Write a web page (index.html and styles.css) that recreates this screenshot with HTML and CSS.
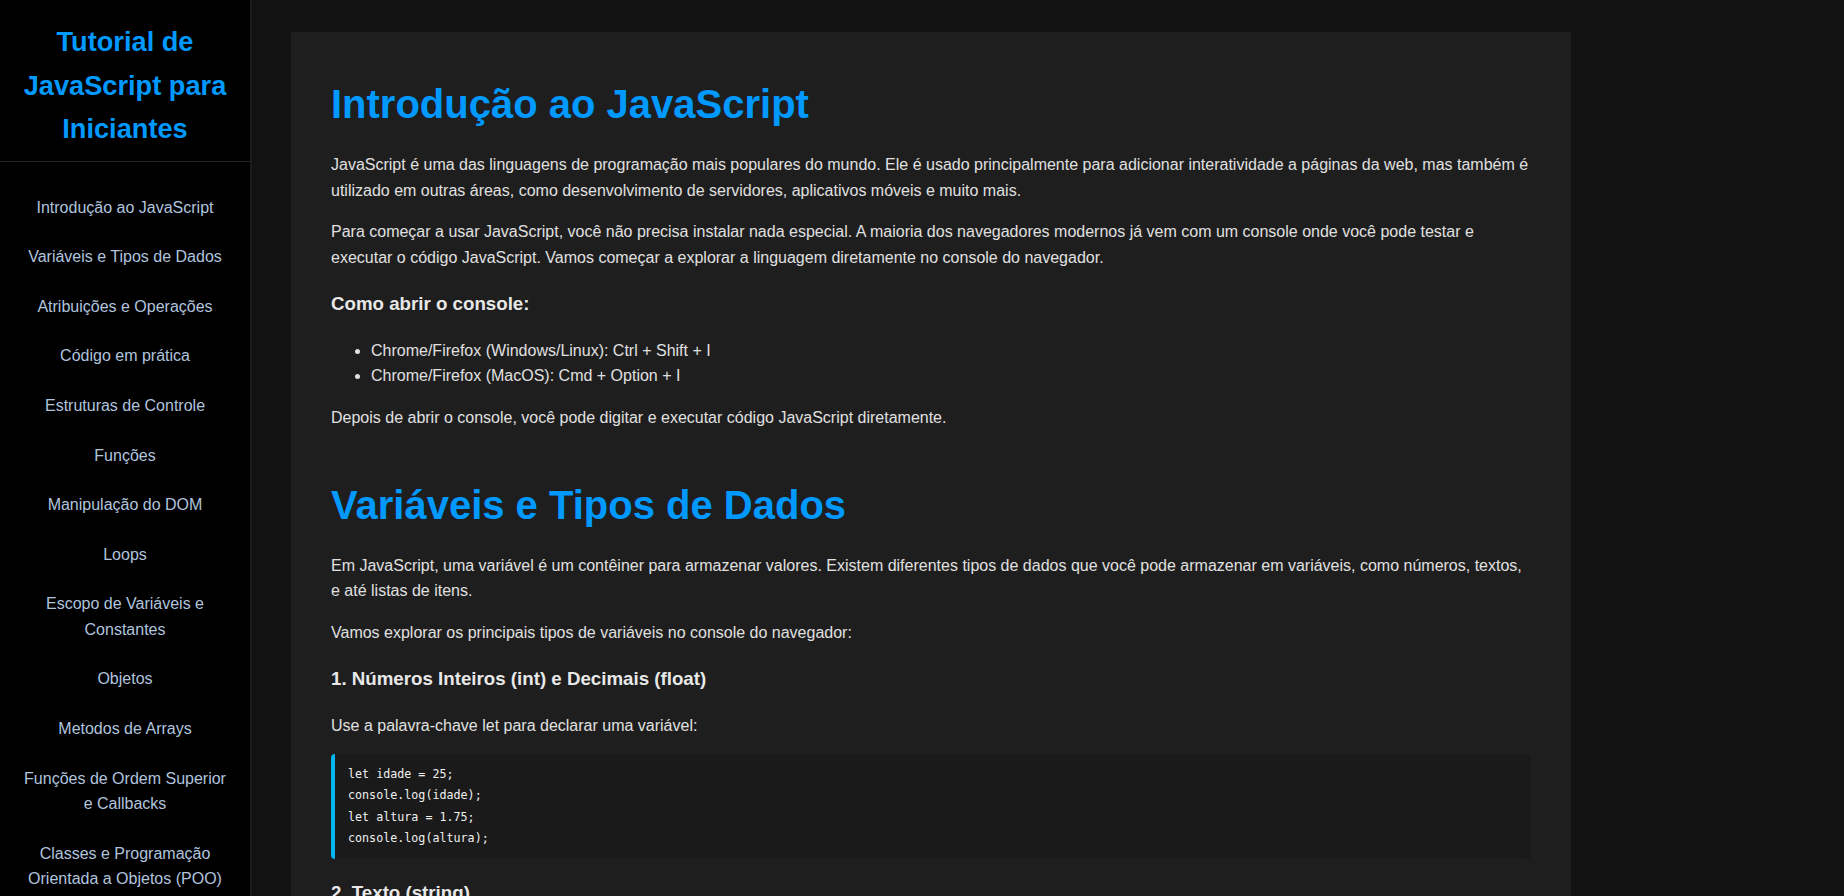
FILE: index.html
```html
<!DOCTYPE html>
<html lang="pt-BR">
<head>
<meta charset="utf-8">
<title>Tutorial de JavaScript para Iniciantes</title>
<link rel="stylesheet" href="styles.css">
</head>
<body>
<aside class="sidebar">
  <header class="sidebar-header">
    <h1 class="site-title">Tutorial de JavaScript para Iniciantes</h1>
  </header>
  <nav class="nav">
    <a class="nav-link" href="#intro">Introdução ao JavaScript</a>
    <a class="nav-link" href="#variaveis">Variáveis e Tipos de Dados</a>
    <a class="nav-link" href="#atribuicoes">Atribuições e Operações</a>
    <a class="nav-link" href="#pratica">Código em prática</a>
    <a class="nav-link" href="#controle">Estruturas de Controle</a>
    <a class="nav-link" href="#funcoes">Funções</a>
    <a class="nav-link" href="#dom">Manipulação do DOM</a>
    <a class="nav-link" href="#loops">Loops</a>
    <a class="nav-link" href="#escopo">Escopo de Variáveis e Constantes</a>
    <a class="nav-link" href="#objetos">Objetos</a>
    <a class="nav-link" href="#arrays">Metodos de Arrays</a>
    <a class="nav-link" href="#ordem">Funções de Ordem Superior e Callbacks</a>
    <a class="nav-link" href="#classes">Classes e Programação Orientada a Objetos (POO)</a>
    <a class="nav-link" href="#async">Programação Assíncrona</a>
    <a class="nav-link" href="#erros">Tratamento de Erros</a>
  </nav>
</aside>
<main class="main">
  <article class="card">
    <section class="section" id="intro">
      <h1 class="section-title">Introdução ao JavaScript</h1>
      <p>JavaScript é uma das linguagens de programação mais populares do mundo. Ele é usado principalmente para adicionar interatividade a páginas da web, mas também é utilizado em outras áreas, como desenvolvimento de servidores, aplicativos móveis e muito mais.</p>
      <p>Para começar a usar JavaScript, você não precisa instalar nada especial. A maioria dos navegadores modernos já vem com um console onde você pode testar e executar o código JavaScript. Vamos começar a explorar a linguagem diretamente no console do navegador.</p>
      <h3 class="sub-title">Como abrir o console:</h3>
      <ul class="list">
        <li>Chrome/Firefox (Windows/Linux): Ctrl + Shift + I</li>
        <li>Chrome/Firefox (MacOS): Cmd + Option + I</li>
      </ul>
      <p>Depois de abrir o console, você pode digitar e executar código JavaScript diretamente.</p>
    </section>
    <section class="section" id="variaveis">
      <h1 class="section-title">Variáveis e Tipos de Dados</h1>
      <p>Em JavaScript, uma variável é um contêiner para armazenar valores. Existem diferentes tipos de dados que você pode armazenar em variáveis, como números, textos, e até listas de itens.</p>
      <p>Vamos explorar os principais tipos de variáveis no console do navegador:</p>
      <h3 class="sub-title">1. Números Inteiros (int) e Decimais (float)</h3>
      <p>Use a palavra-chave let para declarar uma variável:</p>
      <pre class="code">let idade = 25;
console.log(idade);
let altura = 1.75;
console.log(altura);</pre>
      <h3 class="sub-title">2. Texto (string)</h3>
      <p>Textos são escritos entre aspas simples ou duplas:</p>
      <pre class="code">let nome = "Maria";
console.log(nome);</pre>
    </section>
  </article>
</main>
</body>
</html>
```

FILE: styles.css
```css
* {
  box-sizing: border-box;
}

html,
body {
  height: 100%;
}

body {
  margin: 0;
  display: flex;
  overflow: hidden;
  background: #121212;
  color: #e0e0e0;
  font-family: "Liberation Sans", Arial, sans-serif;
  font-size: 16px;
  line-height: 1.6;
}

.sidebar {
  flex: 0 0 252px;
  height: 100vh;
  overflow: hidden;
  background: #000000;
  border-right: 2px solid #1c1c1c;
}

.sidebar-header {
  padding: 20px 20px 10px;
  border-bottom: 1px solid #262626;
  text-align: center;
}

.site-title {
  margin: 0;
  font-size: 27.2px;
  line-height: 1.6;
  font-weight: bold;
  color: #0099ff;
}

.nav {
  display: flex;
  flex-direction: column;
  padding: 21px 0 0;
}

.nav-link {
  display: block;
  padding: 12px 20px;
  color: #b0c4de;
  text-decoration: none;
  text-align: center;
}

.main {
  flex: 1;
  height: 100vh;
  overflow: hidden;
  padding: 32px 39px;
}

.card {
  max-width: 1280px;
  padding: 40px;
  background: #1e1e1e;
}

.section + .section {
  margin-top: 42px;
}

.section-title {
  margin: 0;
  font-size: 40px;
  line-height: 1.6;
  color: #0099ff;
}

.section p {
  margin: 16px 0;
}

.sub-title {
  margin: 18.72px 0;
  font-size: 18.72px;
  color: #e8e8e8;
}

.list {
  margin: 16px 0;
  padding-left: 40px;
}

.code {
  margin: 16px 0;
  padding: 10px 13px;
  background: #1a1a1a;
  border-left: 4px solid #00b4f0;
  border-radius: 4px;
  color: #f0f0f0;
  font-family: "DejaVu Sans Mono", "Liberation Mono", monospace;
  font-size: 11.7px;
  line-height: 21.2px;
  white-space: pre;
}
```
